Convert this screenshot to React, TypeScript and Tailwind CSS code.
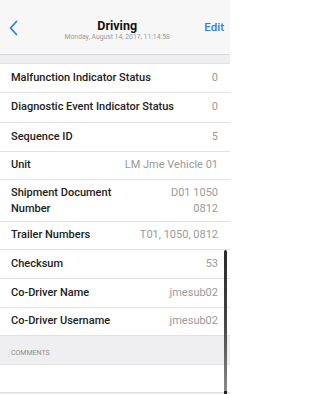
import React from "react";

const rows: { label: string; value: string; h: string }[] = [
  { label: "Malfunction Indicator Status", value: "0", h: "h-[29px]" },
  { label: "Diagnostic Event Indicator Status", value: "0", h: "h-[30px]" },
  { label: "Sequence ID", value: "5", h: "h-[29px]" },
  { label: "Unit", value: "LM Jme Vehicle 01", h: "h-[28px]" },
];

const rows2: { label: string; value: string; h: string }[] = [
  { label: "Trailer Numbers", value: "T01, 1050, 0812", h: "h-[28px]" },
  { label: "Checksum", value: "53", h: "h-[29px]" },
  { label: "Co-Driver Name", value: "jmesub02", h: "h-[29px]" },
  { label: "Co-Driver Username", value: "jmesub02", h: "h-[28px]" },
];

function Row({ label, value, h }: { label: string; value: string; h: string }) {
  return (
    <div className={`${h} flex items-center justify-between border-b border-[#e2e2e2] bg-white pl-[11px] pr-[12px]`}>
      <span className="text-[11px] font-medium text-[#222]">{label}</span>
      <span className="text-[11px] text-[#9a9a9a]">{value}</span>
    </div>
  );
}

export default function App() {
  return (
    <div
      className="relative h-[394px] w-[230px] overflow-hidden bg-[#efeff2]"
      style={{ fontFamily: "Roboto, 'Noto Sans', sans-serif" }}
    >
      <div className="flex h-[55px] items-center justify-between border-b border-[#d6d6d6] bg-[#f7f7f7] pl-[8px] pr-[6px]">
        <svg width="12" height="16" viewBox="0 0 12 16" className="mt-[1px]">
          <path d="M8.5 1.5 L2.5 8 L8.5 14.5" fill="none" stroke="#2f7cf5" strokeWidth="1.8" strokeLinecap="round" strokeLinejoin="round" />
        </svg>
        <div className="mt-[5px] flex flex-col items-center pl-[10px]">
          <span className="text-[12.5px] font-bold leading-[15px] text-[#111]">Driving</span>
          <span className="text-[6.8px] leading-[9px] text-[#9a9a9a]">Monday, August 14, 2017, 11:14:58</span>
        </div>
        <span className="mt-[2px] text-[11.5px] font-medium text-[#2f7cf5]">Edit</span>
      </div>
      <div className="h-[8px]" />
      <div className="border-t border-[#e2e2e2]">
        {rows.map((r) => (
          <Row key={r.label} {...r} />
        ))}
        <div className="flex h-[42px] items-center justify-between border-b border-[#e2e2e2] bg-white pl-[11px] pr-[12px]">
          <span className="w-[110px] text-[11px] font-medium leading-[16px] text-[#222]">Shipment Document Number</span>
          <span className="w-[50px] text-right text-[11px] leading-[16px] text-[#9a9a9a]">D01 1050 0812</span>
        </div>
        {rows2.map((r) => (
          <Row key={r.label} {...r} />
        ))}
        <div className="flex h-[29px] items-end border-b border-[#e2e2e2] bg-[#efeff2] pb-[6px] pl-[11px]">
          <span className="text-[7px] text-[#8e8e8e]">COMMENTS</span>
        </div>
        <div className="h-[28px] border-b border-[#dcdcdc] bg-white" />
      </div>
      <div className="absolute right-[3px] top-[250px] flex h-[144px] w-[3px] flex-col rounded-t-full">
        <div className="flex-1 rounded-t-full bg-gradient-to-b from-[#2a2a2a] via-[#444] to-[#8a8a8a]" />
        <div className="h-[3px] bg-[#222]" />
      </div>
    </div>
  );
}
